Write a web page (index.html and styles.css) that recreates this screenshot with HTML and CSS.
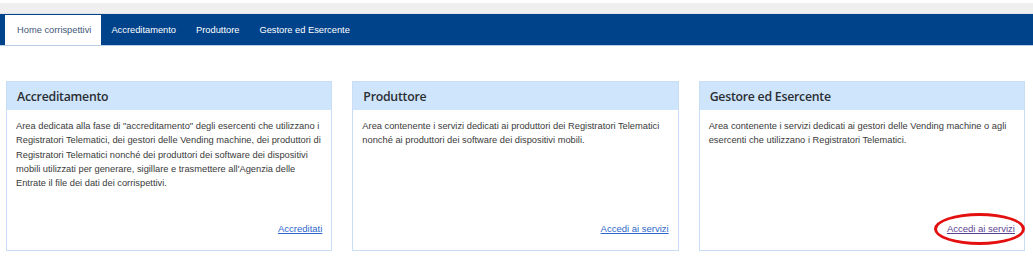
FILE: index.html
```html
<!DOCTYPE html>
<html lang="it">
<head>
    <meta charset="UTF-8">
    <title>Home corrispettivi</title>
    <link rel="stylesheet" href="styles.css">
</head>
<body>
    <div class="topstrip"></div>
    <nav class="navbar">
        <a class="tab active" href="#">Home corrispettivi</a>
        <a class="tab" href="#">Accreditamento</a>
        <a class="tab" href="#">Produttore</a>
        <a class="tab" href="#">Gestore ed Esercente</a>
    </nav>

    <div class="cards">
        <div class="card">
            <div class="card-title">Accreditamento</div>
            <div class="card-body">
                <p>Area dedicata alla fase di "accreditamento" degli esercenti che utilizzano i Registratori Telematici, dei gestori delle Vending machine, dei produttori di Registratori Telematici nonché dei produttori dei software dei dispositivi mobili utilizzati per generare, sigillare e trasmettere all'Agenzia delle Entrate il file dei dati dei corrispettivi.</p>
                <div class="card-link"><a href="#">Accreditati</a></div>
            </div>
        </div>

        <div class="card">
            <div class="card-title">Produttore</div>
            <div class="card-body">
                <p>Area contenente i servizi dedicati ai produttori dei Registratori Telematici nonché ai produttori dei software dei dispositivi mobili.</p>
                <div class="card-link"><a href="#">Accedi ai servizi</a></div>
            </div>
        </div>

        <div class="card">
            <div class="card-title">Gestore ed Esercente</div>
            <div class="card-body">
                <p>Area contenente i servizi dedicati ai gestori delle Vending machine o agli esercenti che utilizzano i Registratori Telematici.</p>
                <div class="card-link"><a class="visited marked" href="#">Accedi ai servizi</a></div>
            </div>
        </div>
    </div>
</body>
</html>
```

FILE: styles.css
```css
body { margin: 0; font-family: "Liberation Sans", Arial, sans-serif; background: #fff; color: #333; }
.topstrip { height: 10px; margin-top: 3px; background: #efefef; border-bottom: 1px solid #dfe3ea; }
.navbar { display: flex; background: #01438b; height: 31px; padding-left: 5px; border-bottom: 1px solid #b9cde6; }
.tab { color: #fff; text-decoration: none; font-size: 9.3px; padding: 0 10px; display: flex; align-items: center; margin-top: 1px; }
.tab.active { background: #fff; color: #3f5778; padding: 0 10px 0 12px; }
.cards { display: flex; gap: 20px; padding: 35px 8px 0 6px; }
.card { flex: 1; border: 1px solid #c9def5; min-height: 168px; display: flex; flex-direction: column; }
.card-title { background: #cfe5fb; height: 28px; display: flex; align-items: center; padding-left: 10px; font-family: "Open Sans", sans-serif; font-weight: 600; font-size: 12.3px; letter-spacing: -0.25px; color: #2a2e33; }
.card-body { flex: 1; display: flex; flex-direction: column; padding: 9px 9px 16px 9px; }
.card-body p { margin: 0; font-size: 9.3px; line-height: 14.3px; color: #3a3a3a; }
.card-link { margin-top: auto; text-align: right; font-size: 9.5px; }
.card-link a { color: #2d67c9; text-decoration: underline; }
.card-link a.visited { color: #5b3f91; }
.marked { position: relative; }
.marked::after { content: ""; position: absolute; left: -13px; right: -10px; top: -10px; bottom: -11px; border: 3px solid #e41010; border-radius: 50%; }
```
